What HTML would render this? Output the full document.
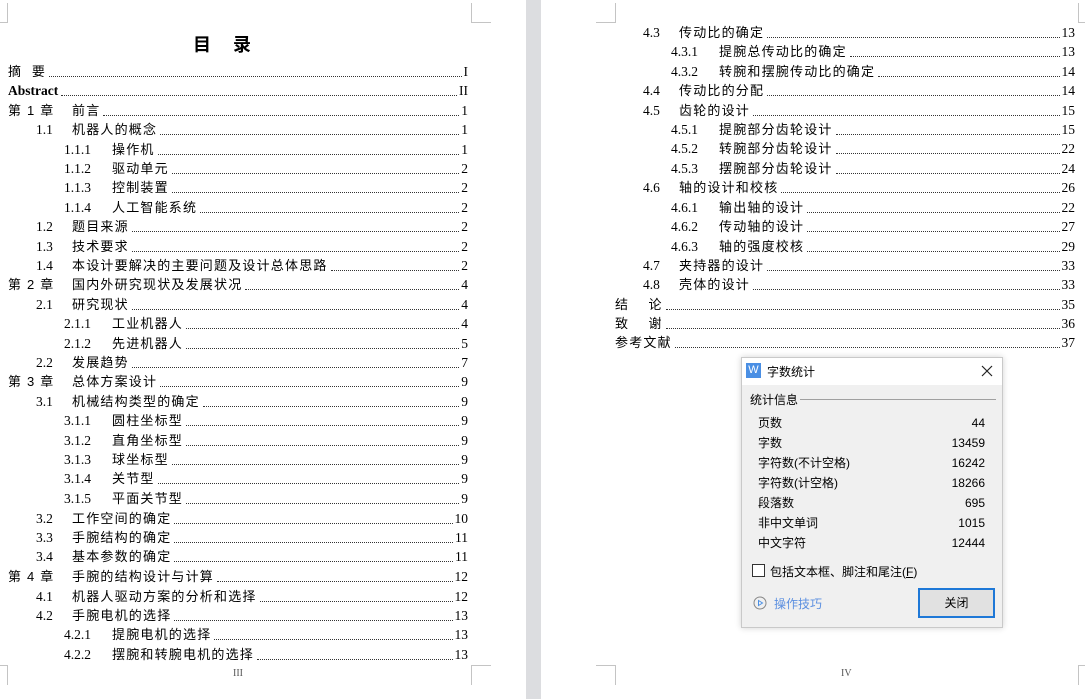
<!DOCTYPE html>
<html><head><meta charset="utf-8">
<style>
*{margin:0;padding:0;box-sizing:border-box}
body{width:1085px;height:699px;position:relative;background:#fff;overflow:hidden;font-family:"Liberation Serif","Noto Sans CJK SC",serif;color:#000}
.gap{position:absolute;left:526px;top:0;width:15px;height:699px;background:#dcdde0}
.m{position:absolute;background:#c4c4c4}
.r{position:absolute;height:19px;display:flex;align-items:center;font-size:13px;line-height:19px;white-space:nowrap}
.n{display:inline-block;font-family:"Liberation Serif",serif;font-size:13.5px}
.t{font-family:"Liberation Sans","Noto Sans CJK SC",sans-serif;letter-spacing:1.2px}
.d{flex:1;border-bottom:1px dotted #333;height:1px;margin:9px 2px 0 3px;align-self:center}
.p{font-family:"Liberation Serif",serif;font-size:13.5px}
.dlg{position:absolute;left:741px;top:357px;width:262px;height:271px;background:#f0f0f0;border:1px solid #c9c9c9;box-shadow:0 0 6px rgba(0,0,0,.18);font-family:"Liberation Sans","Noto Sans CJK SC",sans-serif;font-size:12px}
.dlg .tb{height:27px;background:#fff;position:relative}
.a{position:absolute}
</style></head><body>
<div class="gap"></div>
<div class="m" style="left:7px;top:3px;width:1px;height:20px"></div>
<div class="m" style="left:0;top:22px;width:8px;height:1px"></div>
<div class="m" style="left:471px;top:3px;width:1px;height:20px"></div>
<div class="m" style="left:471px;top:22px;width:20px;height:1px"></div>
<div class="m" style="left:7px;top:665px;width:1px;height:20px"></div>
<div class="m" style="left:0;top:665px;width:8px;height:1px"></div>
<div class="m" style="left:471px;top:665px;width:1px;height:20px"></div>
<div class="m" style="left:471px;top:665px;width:20px;height:1px"></div>
<div class="m" style="left:615px;top:3px;width:1px;height:20px"></div>
<div class="m" style="left:596px;top:22px;width:20px;height:1px"></div>
<div class="m" style="left:1078px;top:3px;width:1px;height:20px"></div>
<div class="m" style="left:1078px;top:22px;width:7px;height:1px"></div>
<div class="m" style="left:615px;top:665px;width:1px;height:20px"></div>
<div class="m" style="left:596px;top:665px;width:20px;height:1px"></div>
<div class="m" style="left:1078px;top:665px;width:1px;height:20px"></div>
<div class="m" style="left:1078px;top:665px;width:7px;height:1px"></div>

<div class="a" style="left:193px;top:31px;font-family:'Liberation Sans','Noto Sans CJK SC',sans-serif;font-size:18px;font-weight:bold;letter-spacing:22px">目录</div>
<div class="a" style="left:233px;top:668px;font-size:10px;color:#555">III</div>
<div class="a" style="left:841px;top:668px;font-size:10px;color:#555">IV</div>

<div class="r" style="top:62px;left:8px;width:460px"><span class="t">摘&nbsp;&nbsp;要</span><span class="d"></span><span class="p">I</span></div>
<div class="r" style="top:81px;left:8px;width:460px"><span class="n" style="font-weight:bold">Abstract</span><span class="d"></span><span class="p">II</span></div>
<div class="r" style="top:101px;left:8px;width:460px"><span class="t" style="width:64px;display:inline-block">第 1 章</span><span class="t">前言</span><span class="d"></span><span class="p">1</span></div>
<div class="r" style="top:120px;left:36px;width:432px"><span class="n" style="width:36px">1.1</span><span class="t">机器人的概念</span><span class="d"></span><span class="p">1</span></div>
<div class="r" style="top:140px;left:64px;width:404px"><span class="n" style="width:48px">1.1.1</span><span class="t">操作机</span><span class="d"></span><span class="p">1</span></div>
<div class="r" style="top:159px;left:64px;width:404px"><span class="n" style="width:48px">1.1.2</span><span class="t">驱动单元</span><span class="d"></span><span class="p">2</span></div>
<div class="r" style="top:178px;left:64px;width:404px"><span class="n" style="width:48px">1.1.3</span><span class="t">控制装置</span><span class="d"></span><span class="p">2</span></div>
<div class="r" style="top:198px;left:64px;width:404px"><span class="n" style="width:48px">1.1.4</span><span class="t">人工智能系统</span><span class="d"></span><span class="p">2</span></div>
<div class="r" style="top:217px;left:36px;width:432px"><span class="n" style="width:36px">1.2</span><span class="t">题目来源</span><span class="d"></span><span class="p">2</span></div>
<div class="r" style="top:237px;left:36px;width:432px"><span class="n" style="width:36px">1.3</span><span class="t">技术要求</span><span class="d"></span><span class="p">2</span></div>
<div class="r" style="top:256px;left:36px;width:432px"><span class="n" style="width:36px">1.4</span><span class="t">本设计要解决的主要问题及设计总体思路</span><span class="d"></span><span class="p">2</span></div>
<div class="r" style="top:275px;left:8px;width:460px"><span class="t" style="width:64px;display:inline-block">第 2 章</span><span class="t">国内外研究现状及发展状况</span><span class="d"></span><span class="p">4</span></div>
<div class="r" style="top:295px;left:36px;width:432px"><span class="n" style="width:36px">2.1</span><span class="t">研究现状</span><span class="d"></span><span class="p">4</span></div>
<div class="r" style="top:314px;left:64px;width:404px"><span class="n" style="width:48px">2.1.1</span><span class="t">工业机器人</span><span class="d"></span><span class="p">4</span></div>
<div class="r" style="top:334px;left:64px;width:404px"><span class="n" style="width:48px">2.1.2</span><span class="t">先进机器人</span><span class="d"></span><span class="p">5</span></div>
<div class="r" style="top:353px;left:36px;width:432px"><span class="n" style="width:36px">2.2</span><span class="t">发展趋势</span><span class="d"></span><span class="p">7</span></div>
<div class="r" style="top:372px;left:8px;width:460px"><span class="t" style="width:64px;display:inline-block">第 3 章</span><span class="t">总体方案设计</span><span class="d"></span><span class="p">9</span></div>
<div class="r" style="top:392px;left:36px;width:432px"><span class="n" style="width:36px">3.1</span><span class="t">机械结构类型的确定</span><span class="d"></span><span class="p">9</span></div>
<div class="r" style="top:411px;left:64px;width:404px"><span class="n" style="width:48px">3.1.1</span><span class="t">圆柱坐标型</span><span class="d"></span><span class="p">9</span></div>
<div class="r" style="top:431px;left:64px;width:404px"><span class="n" style="width:48px">3.1.2</span><span class="t">直角坐标型</span><span class="d"></span><span class="p">9</span></div>
<div class="r" style="top:450px;left:64px;width:404px"><span class="n" style="width:48px">3.1.3</span><span class="t">球坐标型</span><span class="d"></span><span class="p">9</span></div>
<div class="r" style="top:469px;left:64px;width:404px"><span class="n" style="width:48px">3.1.4</span><span class="t">关节型</span><span class="d"></span><span class="p">9</span></div>
<div class="r" style="top:489px;left:64px;width:404px"><span class="n" style="width:48px">3.1.5</span><span class="t">平面关节型</span><span class="d"></span><span class="p">9</span></div>
<div class="r" style="top:509px;left:36px;width:432px"><span class="n" style="width:36px">3.2</span><span class="t">工作空间的确定</span><span class="d"></span><span class="p">10</span></div>
<div class="r" style="top:528px;left:36px;width:432px"><span class="n" style="width:36px">3.3</span><span class="t">手腕结构的确定</span><span class="d"></span><span class="p">11</span></div>
<div class="r" style="top:547px;left:36px;width:432px"><span class="n" style="width:36px">3.4</span><span class="t">基本参数的确定</span><span class="d"></span><span class="p">11</span></div>
<div class="r" style="top:567px;left:8px;width:460px"><span class="t" style="width:64px;display:inline-block">第 4 章</span><span class="t">手腕的结构设计与计算</span><span class="d"></span><span class="p">12</span></div>
<div class="r" style="top:587px;left:36px;width:432px"><span class="n" style="width:36px">4.1</span><span class="t">机器人驱动方案的分析和选择</span><span class="d"></span><span class="p">12</span></div>
<div class="r" style="top:606px;left:36px;width:432px"><span class="n" style="width:36px">4.2</span><span class="t">手腕电机的选择</span><span class="d"></span><span class="p">13</span></div>
<div class="r" style="top:625px;left:64px;width:404px"><span class="n" style="width:48px">4.2.1</span><span class="t">提腕电机的选择</span><span class="d"></span><span class="p">13</span></div>
<div class="r" style="top:645px;left:64px;width:404px"><span class="n" style="width:48px">4.2.2</span><span class="t">摆腕和转腕电机的选择</span><span class="d"></span><span class="p">13</span></div>

<div class="r" style="top:23px;left:643px;width:432px"><span class="n" style="width:36px">4.3</span><span class="t">传动比的确定</span><span class="d"></span><span class="p">13</span></div>
<div class="r" style="top:42px;left:671px;width:404px"><span class="n" style="width:48px">4.3.1</span><span class="t">提腕总传动比的确定</span><span class="d"></span><span class="p">13</span></div>
<div class="r" style="top:62px;left:671px;width:404px"><span class="n" style="width:48px">4.3.2</span><span class="t">转腕和摆腕传动比的确定</span><span class="d"></span><span class="p">14</span></div>
<div class="r" style="top:81px;left:643px;width:432px"><span class="n" style="width:36px">4.4</span><span class="t">传动比的分配</span><span class="d"></span><span class="p">14</span></div>
<div class="r" style="top:101px;left:643px;width:432px"><span class="n" style="width:36px">4.5</span><span class="t">齿轮的设计</span><span class="d"></span><span class="p">15</span></div>
<div class="r" style="top:120px;left:671px;width:404px"><span class="n" style="width:48px">4.5.1</span><span class="t">提腕部分齿轮设计</span><span class="d"></span><span class="p">15</span></div>
<div class="r" style="top:139px;left:671px;width:404px"><span class="n" style="width:48px">4.5.2</span><span class="t">转腕部分齿轮设计</span><span class="d"></span><span class="p">22</span></div>
<div class="r" style="top:159px;left:671px;width:404px"><span class="n" style="width:48px">4.5.3</span><span class="t">摆腕部分齿轮设计</span><span class="d"></span><span class="p">24</span></div>
<div class="r" style="top:178px;left:643px;width:432px"><span class="n" style="width:36px">4.6</span><span class="t">轴的设计和校核</span><span class="d"></span><span class="p">26</span></div>
<div class="r" style="top:198px;left:671px;width:404px"><span class="n" style="width:48px">4.6.1</span><span class="t">输出轴的设计</span><span class="d"></span><span class="p">22</span></div>
<div class="r" style="top:217px;left:671px;width:404px"><span class="n" style="width:48px">4.6.2</span><span class="t">传动轴的设计</span><span class="d"></span><span class="p">27</span></div>
<div class="r" style="top:237px;left:671px;width:404px"><span class="n" style="width:48px">4.6.3</span><span class="t">轴的强度校核</span><span class="d"></span><span class="p">29</span></div>
<div class="r" style="top:256px;left:643px;width:432px"><span class="n" style="width:36px">4.7</span><span class="t">夹持器的设计</span><span class="d"></span><span class="p">33</span></div>
<div class="r" style="top:275px;left:643px;width:432px"><span class="n" style="width:36px">4.8</span><span class="t">壳体的设计</span><span class="d"></span><span class="p">33</span></div>
<div class="r" style="top:295px;left:615px;width:460px"><span class="t">结&nbsp;&nbsp;&nbsp;&nbsp;论</span><span class="d"></span><span class="p">35</span></div>
<div class="r" style="top:314px;left:615px;width:460px"><span class="t">致&nbsp;&nbsp;&nbsp;&nbsp;谢</span><span class="d"></span><span class="p">36</span></div>
<div class="r" style="top:333px;left:615px;width:460px"><span class="t">参考文献</span><span class="d"></span><span class="p">37</span></div>

<div class="dlg">
 <div class="tb">
  <div class="a" style="left:4px;top:5px;width:15px;height:15px;background:#4a8fe4;color:#fff;font-size:11px;line-height:15px;text-align:center">W</div>
  <div class="a" style="left:25px;top:5px;font-size:12px">字数统计</div>
  <svg class="a" style="left:239px;top:7px" width="12" height="12" viewBox="0 0 12 12"><path d="M1 1L11 11M11 1L1 11" stroke="#222" stroke-width="1.2"/></svg>
 </div>
 <div class="a" style="left:8px;top:33px">统计信息</div>
 <div class="a" style="left:58px;top:41px;width:196px;height:1px;background:#a0a0a0"></div>
 <div class="a" style="left:16px;top:55px;line-height:20px">页数<br>字数<br>字符数(不计空格)<br>字符数(计空格)<br>段落数<br>非中文单词<br>中文字符</div>
 <div class="a" style="right:17px;top:55px;line-height:20px;text-align:right">44<br>13459<br>16242<br>18266<br>695<br>1015<br>12444</div>
 <div class="a" style="left:10px;top:206px;width:13px;height:13px;border:1px solid #333;background:#fff"></div>
 <div class="a" style="left:28px;top:205px">包括文本框、脚注和尾注(<u>F</u>)</div>
 <svg class="a" style="left:11px;top:238px" width="14" height="14" viewBox="0 0 14 14"><circle cx="7" cy="7" r="6" fill="none" stroke="#888" stroke-width="1"/><path d="M5.5 4.5L9.5 7L5.5 9.5Z" fill="none" stroke="#4a8fe4"/></svg>
 <div class="a" style="left:32px;top:237px;color:#5b8fe0">操作技巧</div>
 <div class="a" style="left:176px;top:230px;width:77px;height:30px;border:2px solid #1e78d7;background:#e1e1e1;text-align:center;line-height:26px">关闭</div>
</div>
</body></html>
